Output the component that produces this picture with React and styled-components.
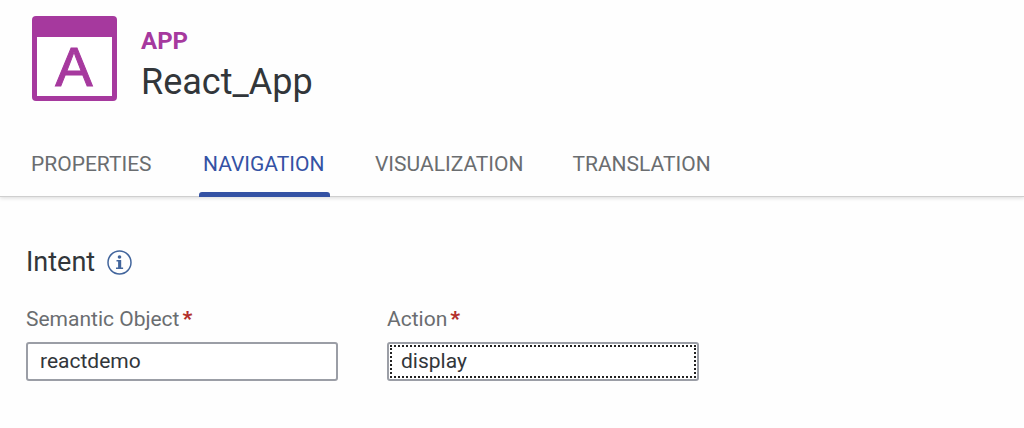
import React, { useState } from 'react'
import styled, { createGlobalStyle } from 'styled-components'

const GlobalStyle = createGlobalStyle`
    * {
        box-sizing: border-box;
    }
    body {
        margin: 0;
        background: #fefefe;
        color: #32363a;
        font-family: Roboto, 'Liberation Sans', sans-serif;
    }
`
const Header = styled.header`
    border-bottom: 1px solid #cfcfcf;
    box-shadow: 0 1px 4px rgba(0, 0, 0, 0.15);
`
const TitleBar = styled.div`
    display: flex;
    gap: 24px;
    padding: 16px 32px 0;
    svg{
        flex: none;
    }
`
const TitleText = styled.div`
    padding-top: 10px;
`
const Kind = styled.p`
    margin: 0;
    font-size: 24px;
    line-height: 30px;
    font-weight: 700;
    color: #a6399e;
`
const Title = styled.h1`
    margin: 0;
    font-size: 36px;
    line-height: 52px;
    font-weight: 400;
`
const Tabs = styled.nav`
    display: flex;
    gap: 41px;
    padding: 32px 27px 0;
`
const Tab = styled.a`
    min-width: 131px;
    padding: 12px 4px 20px;
    font-size: 21px;
    line-height: 24px;
    text-decoration: none;
    color: #6a6d70;
    position: relative;
    &[aria-current]{
        color: #3452a4;
    }
    &[aria-current]::after{
        content: '';
        position: absolute;
        left: 0;
        right: 0;
        bottom: -1px;
        height: 5px;
        border-radius: 3px 3px 0 0;
        background: #3452a4;
    }
`
const Section = styled.main`
    padding: 47px 26px;
`
const SectionHeader = styled.div`
    display: flex;
    align-items: center;
    gap: 12px;
    h2{
        margin: 0;
        font-size: 27px;
        line-height: 36px;
        font-weight: 400;
    }
`
const InfoButton = styled.button`
    display: flex;
    padding: 0;
    border: none;
    background: none;
    cursor: pointer;
`
const Fields = styled.form`
    display: flex;
    flex-wrap: wrap;
    gap: 49px;
    margin-top: 25px;
`
const Field = styled.div`
    width: 312px;
    label{
        display: block;
        margin-bottom: 9px;
        font-size: 21px;
        line-height: 28px;
        color: #6a6d70;
    }
    span{
        margin-left: 3px;
        font-weight: 900;
        color: #b3302c;
    }
    input{
        display: block;
        width: 100%;
        height: 39px;
        padding: 0 12px 1px;
        border: 2px solid #9b9ea6;
        border-radius: 3px;
        background: #fff;
        font-family: inherit;
        font-size: 21px;
        color: #32363a;
    }
    input:focus{
        outline: 2px dotted #222;
        outline-offset: -5px;
    }
`

function AppIcon() {
    return (
        <svg width="85" height="85" viewBox="0 0 85 85" aria-hidden="true">
            <rect width="85" height="85" rx="4" fill="#a6399e" />
            <rect x="5" y="21" width="75" height="59" fill="#fff" />
            <text x="42" y="70" textAnchor="middle" fontFamily="Liberation Sans, sans-serif" fontSize="56" fill="#a6399e" stroke="#a6399e" strokeWidth="1">A</text>
        </svg>
    )
}

function InfoIcon() {
    return (
        <svg width="25" height="25" viewBox="0 0 25 25" fill="#42659c">
            <circle cx="12.5" cy="12.5" r="11.5" fill="none" stroke="#42659c" strokeWidth="1.5" />
            <circle cx="12.5" cy="7" r="1.8" />
            <path d="M9.5 10h4.7v7.4h1.9V19H9v-1.6h2.1v-5.8H9.5z" />
        </svg>
    )
}

const tabs = ['Properties', 'Navigation', 'Visualization', 'Translation']

function App() {
    const [active, setActive] = useState('Navigation')

    return (
        <>
            <GlobalStyle />
            <Header>
                <TitleBar>
                    <AppIcon />
                    <TitleText>
                        <Kind>APP</Kind>
                        <Title>React_App</Title>
                    </TitleText>
                </TitleBar>
                <Tabs>
                    {tabs.map((tab) => (
                        <Tab
                            key={tab}
                            href={`#${tab.toLowerCase()}`}
                            aria-current={tab === active ? 'page' : undefined}
                            onClick={() => setActive(tab)}
                        >
                            {tab.toUpperCase()}
                        </Tab>
                    ))}
                </Tabs>
            </Header>
            <Section>
                <SectionHeader>
                    <h2>Intent</h2>
                    <InfoButton type="button" aria-label="About intent"><InfoIcon /></InfoButton>
                </SectionHeader>
                <Fields>
                    <Field>
                        <label htmlFor="semanticObject">Semantic Object<span>*</span></label>
                        <input id="semanticObject" defaultValue="reactdemo" required />
                    </Field>
                    <Field>
                        <label htmlFor="action">Action<span>*</span></label>
                        <input id="action" defaultValue="display" required autoFocus />
                    </Field>
                </Fields>
            </Section>
        </>
    )
}

export default App
